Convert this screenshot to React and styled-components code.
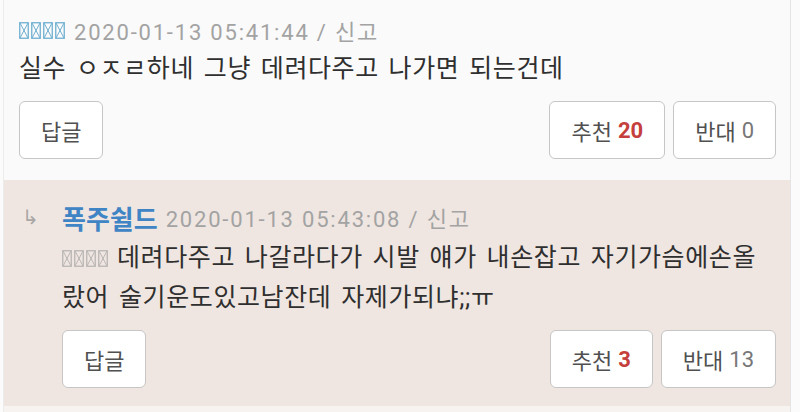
import React from 'react';
import styled, {createGlobalStyle} from "styled-components";

const GlobalStyle = createGlobalStyle`
body {
    margin: 0;
    background: #fbfbfb;
    font-family: Roboto, "Noto Sans CJK KR", sans-serif;
}
`

const comment = {
    stamp: "2020-01-13 05:41:44",
    text: "실수 ㅇㅈㄹ하네 그냥 데려다주고 나가면 되는건데",
    up: 20,
    down: 0,
}

const reply = {
    nick: "폭주쉴드",
    stamp: "2020-01-13 05:43:08",
    lines: ["데려다주고 나갈라다가 시발 얘가 내손잡고 자기가슴에손올", "랐어 술기운도있고남잔데 자제가되냐;;ㅠ"],
    up: 3,
    down: 13,
}

// missing-glyph boxes, as the phone showed them
const Tofu = ({count, color}) => (
    <TofuRow>
        {Array.from({length: count}).map((_, i) => (
            <svg key={i} width="10" height="17" viewBox="0 0 10 17">
                <rect x="0.75" y="0.75" width="8.5" height="15.5" fill="none" stroke={color} strokeWidth="1.3"/>
                <path d="M1 1 L9 16 M9 1 L1 16" stroke={color} strokeWidth="1"/>
            </svg>
        ))}
    </TofuRow>
)

const Actions = ({up, down}) => (
    <ActionRow>
        <Button>답글</Button>
        <Votes>
            <Button>추천 <Up>{up}</Up></Button>
            <Button>반대 <Down>{down}</Down></Button>
        </Votes>
    </ActionRow>
)

const App = () => {
    return (
        <>
            <GlobalStyle/>
            <Board>
                <Comment>
                    <Meta>
                        <Tofu count={4} color="#6fb0d2"/>
                        <Stamp>{comment.stamp} / 신고</Stamp>
                    </Meta>
                    <Body>{comment.text}</Body>
                    <Actions up={comment.up} down={comment.down}/>
                </Comment>
                <Reply>
                    <Arrow>↳</Arrow>
                    <ReplyMain>
                        <Meta>
                            <Nick>{reply.nick}</Nick>
                            <Stamp>{reply.stamp} / 신고</Stamp>
                        </Meta>
                        <ReplyBody>
                            <Line><Tofu count={4} color="#b9b5b3"/>{reply.lines[0]}</Line>
                            <Line>{reply.lines[1]}</Line>
                        </ReplyBody>
                        <Actions up={reply.up} down={reply.down}/>
                    </ReplyMain>
                </Reply>
            </Board>
        </>
    );
};

//-----------Board---------
const Board = styled.div`
margin-left: 3px;
width: 786px;
height: 412px;
border-left: 1px solid #ececec;
border-right: 1px solid #e4e4e4;
background: #f7f3f1;
`
const Comment = styled.div`
background: #fafafa;
padding: 15px 14px 21px 15px;
`
const Meta = styled.div`
display: flex;
align-items: center;
gap: 8px;
height: 30px;
`
const TofuRow = styled.span`
display: inline-flex;
gap: 2px;
margin-right: 1px;
vertical-align: -2px;
`
const Stamp = styled.span`
font-size: 22px;
letter-spacing: 1.8px;
color: #a3a3a3;
`
const Body = styled.div`
margin-top: 4px;
font-size: 25px;
line-height: 40px;
letter-spacing: 0.6px;
word-spacing: 3px;
color: #2f2f2f;
`
const ActionRow = styled.div`
display: flex;
justify-content: space-between;
margin-top: 12px;
`
const Votes = styled.div`
display: flex;
gap: 8px;
`
const Button = styled.div`
display: flex;
align-items: center;
justify-content: center;
gap: 6px;
min-width: 84px;
height: 58px;
box-sizing: border-box;
padding: 0 21px;
background: #fff;
border: 1.5px solid #c6c6c6;
border-radius: 6px;
font-size: 22px;
color: #505050;
`
const Up = styled.b`
color: #c5403c;
font-weight: 700;
`
const Down = styled.span`
color: #777;
`

//-----------Reply---------
const Reply = styled.div`
display: flex;
background: #efe6e1;
padding: 22px 14px 18px 14px;
`
const Arrow = styled.div`
width: 44px;
padding-left: 4px;
box-sizing: border-box;
height: 30px;
line-height: 30px;
font-family: "DejaVu Sans", sans-serif;
font-size: 20px;
color: #a9a6a4;
`
const ReplyMain = styled.div`
flex: 1;
`
const Nick = styled.span`
font-size: 26px;
font-weight: 700;
color: #3f84c4;
`
const ReplyBody = styled.div`
margin-top: 6px;
`
const Line = styled.div`
display: flex;
align-items: center;
gap: 8px;
font-size: 25px;
line-height: 40px;
letter-spacing: 0.6px;
word-spacing: 3px;
color: #2f2f2f;
white-space: pre;
`

export default App;
